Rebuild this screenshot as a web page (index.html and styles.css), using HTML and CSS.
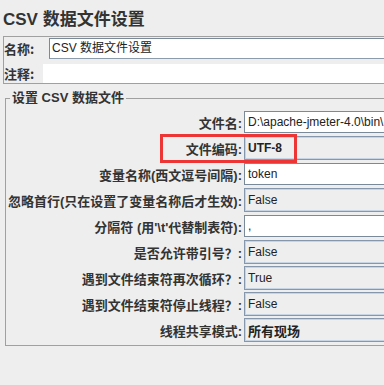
FILE: index.html
```html
<!DOCTYPE html>
<html lang="zh">
<head>
<meta charset="utf-8">
<title>CSV 数据文件设置</title>
<link rel="stylesheet" href="styles.css">
</head>
<body>
<div class="page">
  <h1 class="title">CSV 数据文件设置</h1>
  <div class="namebox">
    <div class="name-row">
      <span class="nlabel name-label">名称:</span>
      <div class="ninput">CSV 数据文件设置</div>
    </div>
    <div class="comment-row">
      <span class="nlabel comment-label">注释:</span>
      <div class="narea"></div>
    </div>
  </div>
  <fieldset class="group">
    <legend class="legend">设置 CSV 数据文件</legend>
    <div class="grid">
      <span class="label">文件名:</span>
      <div class="field text">D:\apache-jmeter-4.0\bin\</div>

      <span class="label">文件编码:</span>
      <div class="field combo strong">UTF-8</div>

      <span class="label">变量名称(西文逗号间隔):</span>
      <div class="field text">token</div>

      <span class="label">忽略首行(只在设置了变量名称后才生效):</span>
      <div class="field combo">False</div>

      <span class="label">分隔符 (用'\t'代替制表符):</span>
      <div class="field text">,</div>

      <span class="label">是否允许带引号？:</span>
      <div class="field combo">False</div>

      <span class="label">遇到文件结束符再次循环？:</span>
      <div class="field combo">True</div>

      <span class="label">遇到文件结束符停止线程？:</span>
      <div class="field combo">False</div>

      <span class="label">线程共享模式:</span>
      <div class="field combo strong cjk">所有现场</div>
    </div>
  </fieldset>
  <div class="highlight"></div>
</div>
</body>
</html>
```

FILE: styles.css
```css
html, body {
  margin: 0;
  padding: 0;
  background: #eeeeee;
  overflow: hidden;
}

.page {
  position: relative;
  width: 384px;
  height: 385px;
  overflow: hidden;
  color: #333333;
  font-family: "Liberation Sans", "Noto Sans CJK SC", sans-serif;
}

.title {
  margin: 0;
  padding: 10px 0 0 3px;
  height: 36px;
  box-sizing: border-box;
  font-size: 17px;
  line-height: 20px;
  font-weight: bold;
  color: #333333;
  white-space: nowrap;
}

.namebox {
  margin: 0 -40px 0 3px;
  border: 1px solid #a0a0a0;
  padding: 1px 0 0 0;
  box-sizing: border-box;
  height: 48px;
}

.name-row {
  display: flex;
  align-items: center;
  height: 21px;
}

.comment-row {
  display: flex;
  align-items: center;
  margin-top: 5px;
  height: 19px;
}

.nlabel {
  font-family: "Noto Sans CJK SC", sans-serif;
  font-weight: bold;
  font-size: 13px;
  line-height: 16px;
  white-space: nowrap;
}

.name-label { width: 45px; }
.comment-label { width: 39px; }

.ninput {
  flex: 1;
  height: 21px;
  box-sizing: border-box;
  background: #ffffff;
  border: 1px solid #7a8a99;
  border-bottom-color: #8d9cab;
  border-right: none;
  padding-left: 2px;
  font-size: 12px;
  line-height: 19px;
  color: #222222;
  white-space: nowrap;
}

.narea {
  flex: 1;
  height: 19px;
  background: #ffffff;
}

.group {
  margin: 7px -40px 0 5px;
  padding: 0 0 3px 0;
  border: 1px solid #a0a0a0;
  min-width: 0;
}

.legend {
  margin-left: 4px;
  padding: 0 2px;
  font-family: "Liberation Sans", "Noto Sans CJK SC", sans-serif;
  font-weight: bold;
  font-size: 13px;
  line-height: 14px;
  color: #333333;
  white-space: nowrap;
}

.grid {
  margin-top: 5px;
  display: grid;
  grid-template-columns: 236px 1fr;
  grid-auto-rows: 24px;
  column-gap: 2px;
  row-gap: 2px;
}

.label {
  display: flex;
  align-items: center;
  justify-content: flex-end;
  font-family: "Liberation Sans", "Noto Sans CJK SC", sans-serif;
  font-weight: bold;
  font-size: 13px;
  color: #333333;
  white-space: nowrap;
}

.field {
  display: flex;
  align-items: center;
  box-sizing: border-box;
  padding-left: 3px;
  font-family: "Liberation Sans", "Noto Sans CJK SC", sans-serif;
  font-size: 12px;
  color: #222222;
  white-space: nowrap;
  overflow: hidden;
}

.field.text {
  background: #ffffff;
  border: 1px solid #7a8a99;
  border-right: none;
  height: 22px;
  align-self: center;
}

.field.combo {
  background: #eeeeee;
  border: 1px solid #8497ad;
  border-right: none;
  box-shadow: inset 1px 1px 0 #c6d4e3, inset 0 -1px 0 #c6d4e3;
}

.field.strong {
  font-weight: bold;
}

.field.cjk {
  font-size: 13px;
}

.highlight {
  position: absolute;
  left: 160px;
  top: 134px;
  width: 137px;
  height: 29px;
  box-sizing: border-box;
  border: 3px solid #ee3535;
}
```
